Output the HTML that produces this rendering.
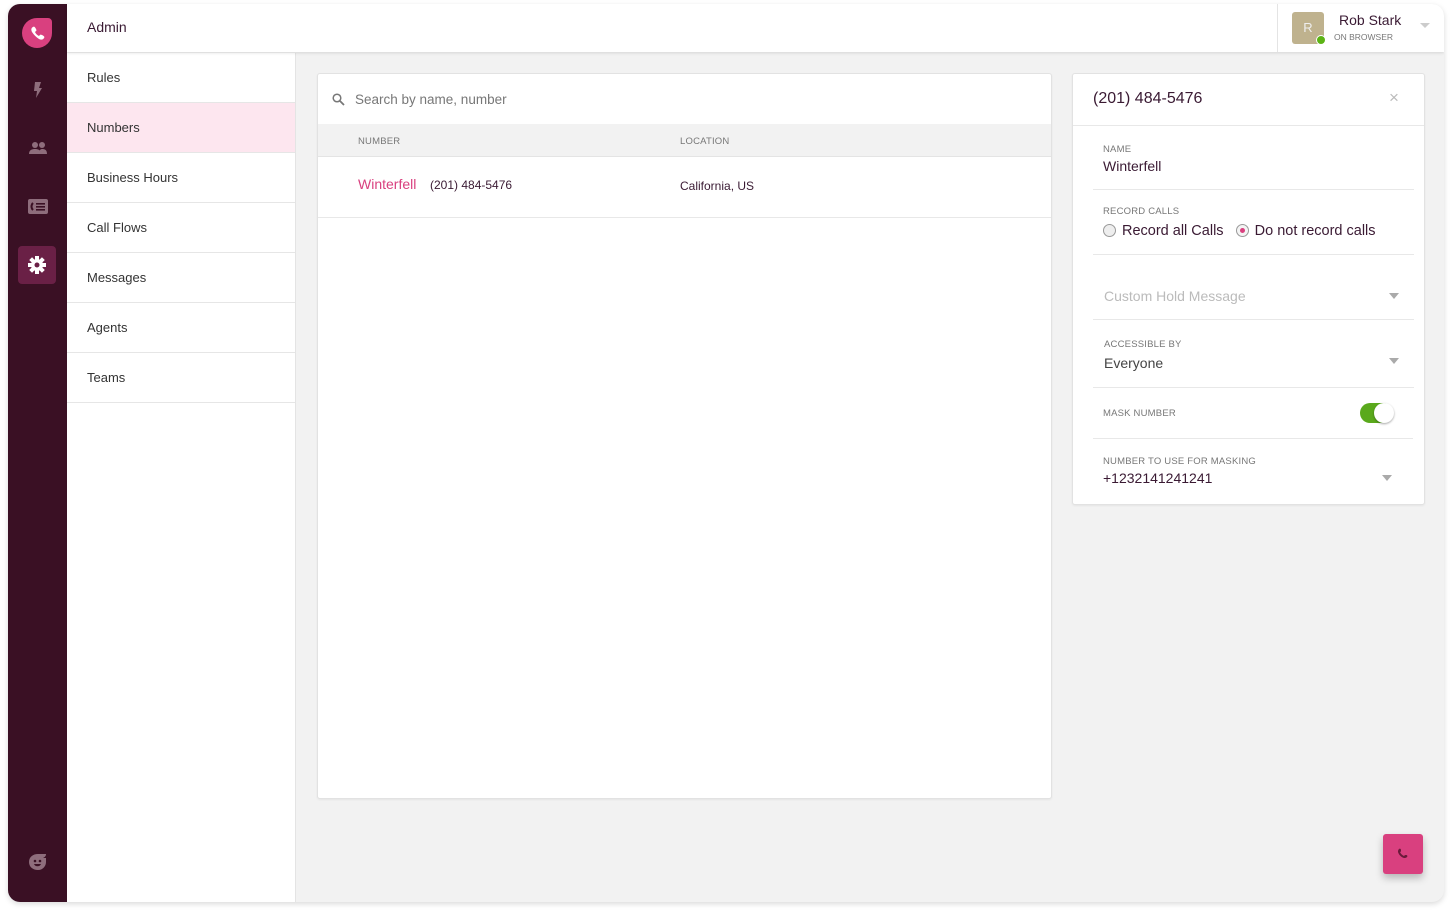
<!DOCTYPE html>
<html><head><meta charset="utf-8"><style>
*{box-sizing:border-box;margin:0;padding:0}
body{width:1452px;height:914px;background:#fff;font-family:"Liberation Sans",sans-serif;position:relative;overflow:hidden;color:#3a1a33}
.win{position:absolute;left:8px;top:4px;width:1436px;height:898px;border-radius:12px;overflow:hidden;background:#f2f2f2;box-shadow:0 2px 6px rgba(0,0,0,.15)}
.side{position:absolute;left:0;top:0;width:59px;height:898px;background:#3a1024}
.logo{position:absolute;left:14px;top:14px;width:30px;height:30px;background:#d9407f;border-radius:50%;border-top-right-radius:4px}
.ico{position:absolute;left:0;width:59px;text-align:center}
.gear{position:absolute;left:10px;top:242px;width:38px;height:38px;background:#6a2046;border-radius:4px}
.top{position:absolute;left:59px;top:0;right:0;height:48px;background:#fff;box-shadow:0 1px 3px rgba(0,0,0,.12);z-index:2}
.nav{position:absolute;left:59px;top:49px;width:229px;bottom:0;background:#fff;border-right:1px solid #e4e4e4}
.nav div{height:50px;border-bottom:1px solid #e6e6e6;padding-left:20px;line-height:50px;font-size:13px;color:#333}
.card{position:absolute;background:#fff;border:1px solid #e2e2e2;border-radius:3px;box-shadow:0 1px 2px rgba(0,0,0,.06)}
.lbl{font-size:9.5px;color:#777;letter-spacing:.2px}
.row{position:absolute;left:20px;right:10px;border-bottom:1px solid #e8e8e8}
.tri{position:absolute;width:0;height:0;border-left:5px solid transparent;border-right:5px solid transparent;border-top:6px solid #aaa}
.radio{display:inline-block;width:13px;height:13px;border-radius:50%;border:1px solid #999;background:#eee;vertical-align:-2px;margin-right:6px;position:relative}
</style></head><body>
<div class="win">
 <div class="side">
  <div class="logo"><svg width="30" height="30" viewBox="0 0 30 30"><path d="M11 9c1-1 2 0 3 2s0 2-1 3c1 2 2 3 4 4 1-1 1-2 3-1s3 2 2 3c-1 2-3 2-5 1-3-2-5-4-7-7-1-2-1-4 1-5z" fill="#fff"/></svg></div>
  <div class="ico" style="top:78px"><svg width="12" height="16" viewBox="0 0 12 16"><path d="M3 0h6l-2 6h3l-6 10 1-7H2z" fill="#8e6d7c"/></svg></div>
  <div class="ico" style="top:137px"><svg width="20" height="14" viewBox="0 0 20 14"><circle cx="7" cy="4" r="3" fill="#8e6d7c"/><circle cx="14" cy="4" r="3" fill="#8e6d7c"/><path d="M1 13c0-4 3-5 6-5s6 1 6 5zM11 13c0-3 1-5 3-5 3 0 5 1 5 5z" fill="#8e6d7c"/></svg></div>
  <div class="ico" style="top:195px"><svg width="20" height="15" viewBox="0 0 20 15"><rect x="0" y="0" width="20" height="15" rx="2" fill="#8e6d7c"/><path d="M5 4c-2 2-2 5 0 7" stroke="#3a1024" stroke-width="2" fill="none"/><rect x="8" y="4" width="9" height="1.6" fill="#3a1024"/><rect x="8" y="7" width="9" height="1.6" fill="#3a1024"/><rect x="8" y="10" width="9" height="1.6" fill="#3a1024"/></svg></div>
  <div class="gear"><svg width="38" height="38" viewBox="0 0 38 38"><g transform="translate(19 19)" fill="#fff"><circle r="6"/><rect x="-2" y="-9" width="4" height="18"/><rect x="-2" y="-9" width="4" height="18" transform="rotate(45)"/><rect x="-2" y="-9" width="4" height="18" transform="rotate(90)"/><rect x="-2" y="-9" width="4" height="18" transform="rotate(135)"/><circle r="2.5" fill="#6a2046"/></g></svg></div>
  <div class="ico" style="top:849px"><svg width="20" height="18" viewBox="0 0 20 18"><path d="M10 1c-5 0-9 3-9 8s4 8 9 8 8-4 8-8V5h-3c2-1 3-2 3-4z" fill="#8e6d7c"/><circle cx="7" cy="8" r="1.3" fill="#3a1024"/><circle cx="12" cy="8" r="1.3" fill="#3a1024"/><path d="M6 11c1 3 6 3 7 0z" fill="#3a1024"/></svg></div>
 </div>
 <div class="top">
  <div style="position:absolute;left:20px;top:15px;font-size:14px;color:#3a1a33">Admin</div>
  <div style="position:absolute;left:1210px;top:0;width:1px;height:48px;background:#e4e4e4"></div>
  <div style="position:absolute;left:1225px;top:8px;width:32px;height:32px;background:#bfb28e;border-radius:3px;color:#eee;font-size:13px;text-align:center;line-height:32px">R</div>
  <div style="position:absolute;left:1249px;top:31px;width:10px;height:10px;border-radius:50%;background:#5cb315;border:1.5px solid #fff"></div>
  <div style="position:absolute;left:1272px;top:8px;font-size:14px;color:#3a1a33">Rob Stark</div>
  <div style="position:absolute;left:1267px;top:28px;font-size:8.5px;color:#777">ON BROWSER</div>
  <div class="tri" style="left:1353px;top:19px;border-top-color:#ccc;border-width:5px 5px 0 5px"></div>
 </div>
 <div class="nav">
  <div>Rules</div><div style="background:#fde6ef">Numbers</div><div>Business Hours</div><div>Call Flows</div><div>Messages</div><div>Agents</div><div>Teams</div>
 </div>
 <div class="card" style="left:309px;top:69px;width:735px;height:726px">
  <svg style="position:absolute;left:14px;top:19px" width="13" height="13" viewBox="0 0 13 13"><circle cx="5" cy="5" r="3.8" stroke="#777" stroke-width="1.5" fill="none"/><path d="M8 8l4 4" stroke="#777" stroke-width="1.8"/></svg>
  <div style="position:absolute;left:37px;top:18px;font-size:13.5px;color:#777">Search by name, number</div>
  <div style="position:absolute;left:0;right:0;top:50px;height:33px;background:#f2f2f2;border-bottom:1px solid #e4e4e4"></div>
  <div class="lbl" style="position:absolute;left:40px;top:62px">NUMBER</div>
  <div class="lbl" style="position:absolute;left:362px;top:62px">LOCATION</div>
  <div style="position:absolute;left:40px;top:102px;font-size:14px;color:#d9407f">Winterfell</div>
  <div style="position:absolute;left:112px;top:104px;font-size:12px;color:#3a1a33">(201) 484-5476</div>
  <div style="position:absolute;left:362px;top:105px;font-size:12px;color:#3a1a33">California, US</div>
  <div style="position:absolute;left:0;right:0;top:143px;border-bottom:1px solid #e8e8e8"></div>
 </div>
 <div class="card" style="left:1064px;top:69px;width:353px;height:432px">
  <div style="position:absolute;left:20px;top:16px;font-size:16px;color:#3a1a33">(201) 484-5476</div>
  <div style="position:absolute;left:316px;top:14px;font-size:17px;color:#bbb">×</div>
  <div style="position:absolute;left:0;right:0;top:51px;border-bottom:1px solid #e8e8e8"></div>
  <div class="lbl" style="position:absolute;left:30px;top:70px">NAME</div>
  <div style="position:absolute;left:30px;top:84px;font-size:14px;color:#3a1a33">Winterfell</div>
  <div class="row" style="top:115px"></div>
  <div class="lbl" style="position:absolute;left:30px;top:132px">RECORD CALLS</div>
  <div style="position:absolute;left:30px;top:149px;font-size:14.5px;color:#3a1a33"><span class="radio"></span>Record all Calls&nbsp;&nbsp;&nbsp;<span class="radio" style="background:#f4f4f4"><span style="position:absolute;left:3px;top:3px;width:5px;height:5px;border-radius:50%;background:#d9407f"></span></span>Do not record calls</div>
  <div class="row" style="top:180px"></div>
  <div style="position:absolute;left:31px;top:214px;font-size:14px;color:#bbb">Custom Hold Message</div>
  <div class="tri" style="left:316px;top:219px"></div>
  <div class="row" style="top:245px"></div>
  <div class="lbl" style="position:absolute;left:31px;top:265px">ACCESSIBLE BY</div>
  <div style="position:absolute;left:31px;top:281px;font-size:14px;color:#444">Everyone</div>
  <div class="tri" style="left:316px;top:284px"></div>
  <div class="row" style="top:313px"></div>
  <div class="lbl" style="position:absolute;left:30px;top:334px">MASK NUMBER</div>
  <div style="position:absolute;left:287px;top:329px;width:33px;height:20px;border-radius:10px;background:#5aa91c"></div>
  <div style="position:absolute;left:301px;top:329px;width:20px;height:20px;border-radius:50%;background:#fff;box-shadow:0 1px 2px rgba(0,0,0,.35)"></div>
  <div class="row" style="top:364px;right:11px"></div>
  <div class="lbl" style="position:absolute;left:30px;top:382px">NUMBER TO USE FOR MASKING</div>
  <div style="position:absolute;left:30px;top:396px;font-size:14px;color:#3a1a33">+1232141241241</div>
  <div class="tri" style="left:309px;top:401px"></div>
 </div>
 <div style="position:absolute;left:1375px;top:830px;width:40px;height:40px;background:#d9407f;border-radius:3px;box-shadow:0 4px 8px rgba(0,0,0,.25)"><svg width="40" height="40" viewBox="0 0 40 40"><path d="M16 15c1-1 2 0 2 1s0 2-1 2c1 2 2 3 4 4 1-1 1-1 2-1s2 1 1 2c-1 1-2 1-3 1-3-1-5-3-6-6 0-1 0-2 1-3z" fill="#6a1a3a"/></svg></div>
</div>
</body></html>
